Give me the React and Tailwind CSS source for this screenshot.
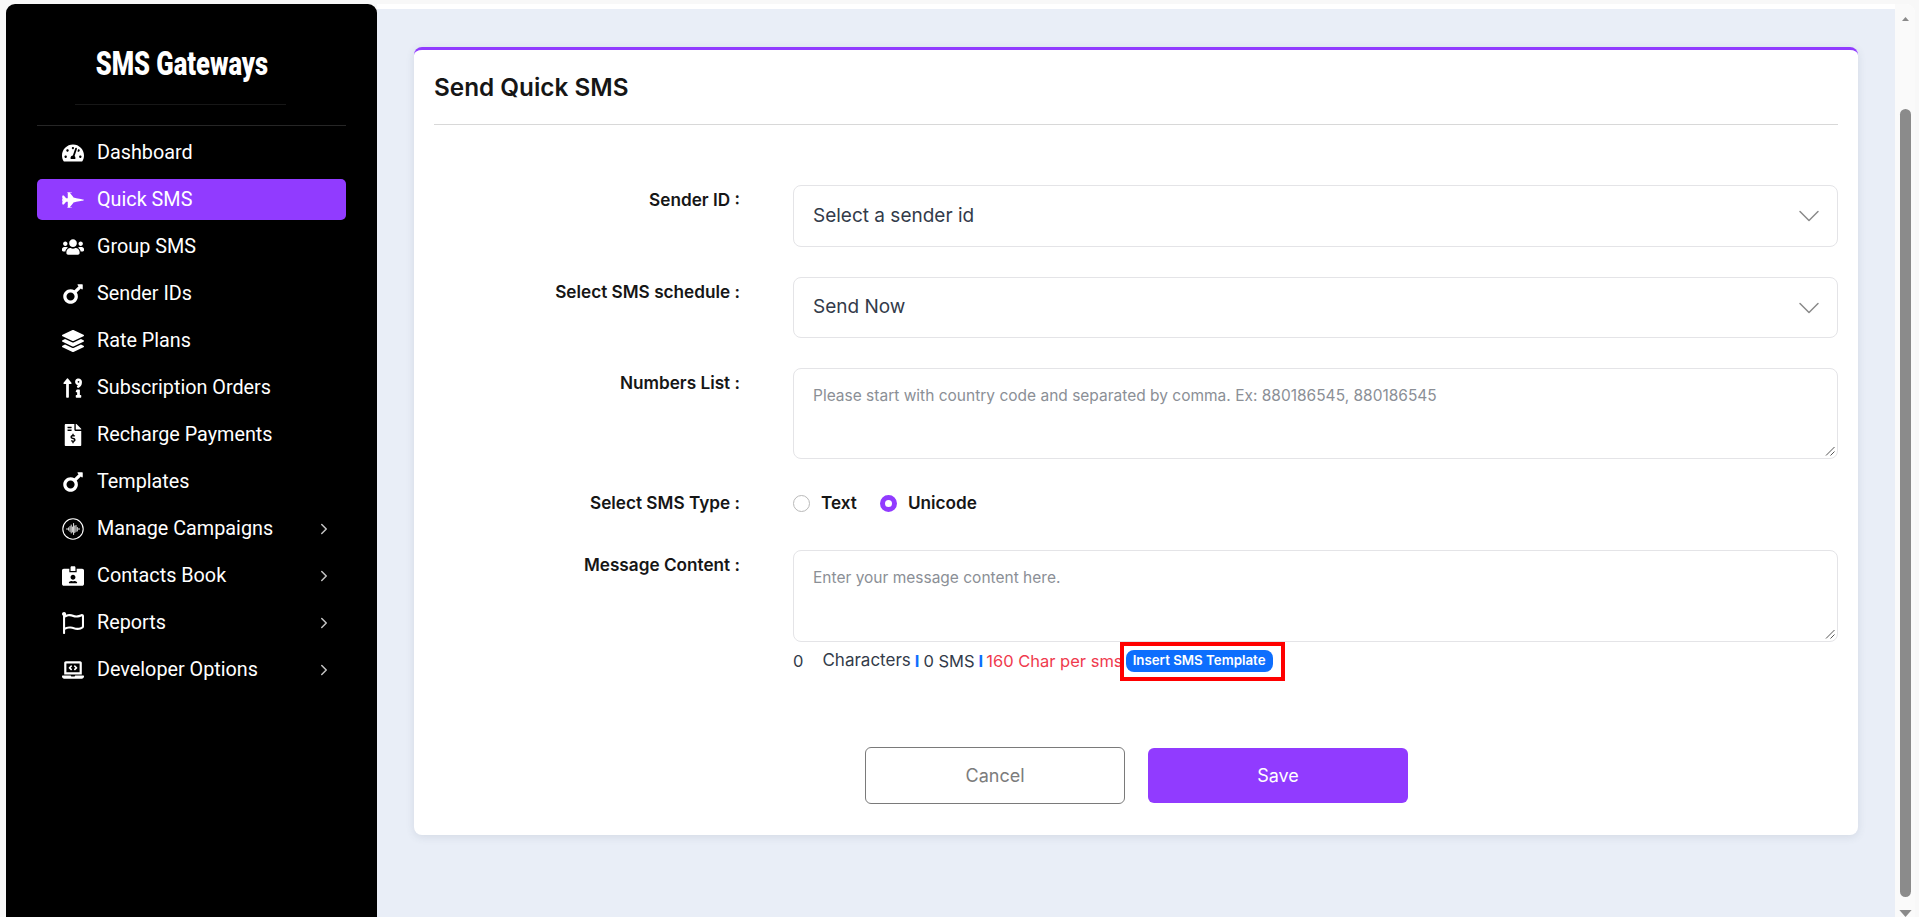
import React from "react";
import { FaTachometerAlt, FaFighterJet, FaUsers, FaMars, FaLayerGroup, FaSortNumericUpAlt, FaFileInvoiceDollar, FaIdCardAlt, FaRegFlag, FaLaptopCode } from "react-icons/fa";
import { ChevronDown, ChevronRight } from "lucide-react";

function Voice({ className }) {
  return (
    <svg viewBox="0 0 22 22" className={className} fill="none" stroke="currentColor">
      <circle cx="11" cy="11" r="10.2" strokeWidth="1.1" />
      <path d="M4.5 11h1.2M6.6 9.8v2.4M8 8.5v5M9.2 7v8M10.4 9v5M11.6 5.5v11M12.8 8v6.5M14 7.5v6M15.3 9.5v3.5M16.4 11h1.2" strokeWidth="0.9" strokeLinecap="round" />
    </svg>
  );
}

function Mars() {
  return <FaMars className="h-[26px] w-[26px] shrink-0" />;
}

const items = [
  ["Dashboard", FaTachometerAlt],
  ["Quick SMS", FaFighterJet, false, true],
  ["Group SMS", FaUsers],
  ["Sender IDs", Mars],
  ["Rate Plans", FaLayerGroup],
  ["Subscription Orders", FaSortNumericUpAlt],
  ["Recharge Payments", FaFileInvoiceDollar],
  ["Templates", Mars],
  ["Manage Campaigns", Voice, true],
  ["Contacts Book", FaIdCardAlt, true],
  ["Reports", FaRegFlag, true],
  ["Developer Options", FaLaptopCode, true],
];

function Row({ label, children, pad = "pt-[3px]" }) {
  return (
    <div className="flex items-start">
      <div className={`w-[306px] text-right text-[17.2px] leading-[24px] font-semibold text-[#161616] ${pad}`}>{label}</div>
      <div className="ml-[53px] flex-1">{children}</div>
    </div>
  );
}

function Select({ children, h }) {
  return (
    <div className={`flex items-center justify-between rounded-[8px] border border-[#e4e4e7] pl-[19px] pr-[10px] text-[19px] text-[#333b4a] ${h}`}>
      <span>{children}</span>
      <ChevronDown className="h-[36px] w-[36px] text-[#8a8a8a]" strokeWidth={1} />
    </div>
  );
}

function Area({ children, h }) {
  return (
    <div className={`relative rounded-[8px] border border-[#e4e4e7] px-[19px] pt-[15px] text-[15.5px] leading-[24px] text-[#8b8f96] ${h}`}>
      {children}
      <svg viewBox="0 0 10 10" className="absolute right-[2px] bottom-[2px] h-[10px] w-[10px]" stroke="#555" strokeWidth="1">
        <path d="M1 9.5 9.5 1M5.5 9.5 9.5 5.5" />
      </svg>
    </div>
  );
}

export default function App() {
  return (
    <div className="flex h-[917px] overflow-hidden bg-[#f8f8f8] font-['Inter',sans-serif]">
      <aside className="ml-[6px] mt-[4px] w-[371px] shrink-0 rounded-t-[9px] bg-black text-white font-['Roboto',sans-serif]">
        <div className="flex h-[100px] items-center justify-center pr-[20px] pt-[18px]">
          <span className="inline-block origin-center scale-x-[0.75] text-[34px] font-black leading-none whitespace-nowrap">SMS Gateways</span>
        </div>
        <div className="ml-[69px] w-[211px] border-t border-[#171717]" />
        <div className="mx-[31px] mt-[20px] w-[309px] border-t border-[#262626]" />
        <nav className="mx-[31px] mt-[6px] flex w-[309px] flex-col gap-[6px]">
          {items.map(([label, Icon, chev, active]) => (
            <div key={label} className={`flex h-[41px] items-center rounded-[5px] pl-[25px] pr-[13px] text-[19.8px] ${active ? "bg-[#913bff]" : ""}`}>
              <span className="flex w-[22px] justify-center"><Icon className="h-[22px] w-[22px]" /></span>
              <span className="ml-[13px] flex-1">{label}</span>
              {chev && <ChevronRight className="h-[18px] w-[18px] text-[#c4c4c4]" strokeWidth={2} />}
            </div>
          ))}
        </nav>
      </aside>

      <div className="mt-[4px] mr-[4px] flex flex-1 rounded-tr-[9px] bg-white">
        <main className="mt-[5px] flex-1 bg-[#e9eef7] px-[37px] pt-[38px]">
          <section className="h-[788px] rounded-[8px] border-t-[3px] border-[#913bff] bg-white px-[20px] shadow-[0_2px_8px_rgba(60,70,100,0.12)]">
            <div className="flex h-[75px] items-center border-b border-[#d8d8d8]">
              <h1 className="text-[24.3px] font-semibold text-[#161616]">Send Quick SMS</h1>
            </div>
            <div className="mt-[60px] flex flex-col">
              <Row label="Sender ID :"><Select h="h-[62px]">Select a sender id</Select></Row>
              <div className="h-[30px]" />
              <Row label="Select SMS schedule :"><Select h="h-[61px]">Send Now</Select></Row>
              <div className="h-[30px]" />
              <Row label="Numbers List :"><Area h="h-[91px]">Please start with country code and separated by comma. Ex: 880186545, 880186545</Area></Row>
              <div className="h-[32px]" />
              <Row label="Select SMS Type :" pad="pt-0">
                <div className="flex h-[24px] items-center text-[17.2px] font-semibold text-[#161616]">
                  <span className="h-[17px] w-[17px] rounded-full border border-[#b9b9b9]" />
                  <span className="ml-[11px]">Text</span>
                  <span className="ml-[23px] h-[17px] w-[17px] rounded-full border-[5px] border-[#913bff]" />
                  <span className="ml-[11px]">Unicode</span>
                </div>
              </Row>
              <div className="h-[35px]" />
              <Row label="Message Content :"><Area h="h-[92px]">Enter your message content here.</Area></Row>
              <div className="ml-[359px] mt-[7px] flex h-[24px] items-center text-[16.5px] text-[#333b4a] whitespace-nowrap">
                <span>0</span>
                <span className="ml-[19px] text-[17px]">Characters</span>
                <span className="ml-[4px] font-bold text-[#0d6efd]">I</span>
                <span className="ml-[4px]">0 SMS</span>
                <span className="ml-[4px] font-bold text-[#0d6efd]">I</span>
                <span className="ml-[3px] text-[#ef3a4d]">160 Char per sms</span>
                <span className="relative ml-[3px] flex h-[22px] w-[147px] items-center justify-center rounded-[8px] bg-[#0d6efd] text-[13.3px] font-semibold text-white">
                  Insert SMS Template
                  <span className="absolute -left-[6px] -right-[12px] -top-[8px] -bottom-[9px] border-[4px] border-[#ff0000]" />
                </span>
              </div>
              <div className="mt-[74px] ml-[431px] flex items-center gap-[23px]">
                <button className="h-[57px] w-[260px] rounded-[6px] border border-[#7a7a7a] text-[18px] text-[#7c7c7c]">Cancel</button>
                <button className="h-[55px] w-[260px] rounded-[6px] bg-[#913bff] text-[18px] text-white">Save</button>
              </div>
            </div>
          </section>
        </main>

        <div className="flex w-[20px] shrink-0 flex-col items-center rounded-tr-[9px] bg-[#fafafa]">
          <svg viewBox="0 0 14 8" className="mt-[13px] h-[7px] w-[13px]" fill="#8a8a8a"><path d="M7 0 14 8H0z" /></svg>
          <div className="mt-[88px] h-[788px] w-[11px] shrink-0 rounded-full bg-[#8b8b8b]" />
          <svg viewBox="0 0 14 8" className="mt-[13px] h-[7px] w-[13px] shrink-0" fill="#8a8a8a"><path d="M7 8 14 0H0z" /></svg>
        </div>
      </div>
    </div>
  );
}
